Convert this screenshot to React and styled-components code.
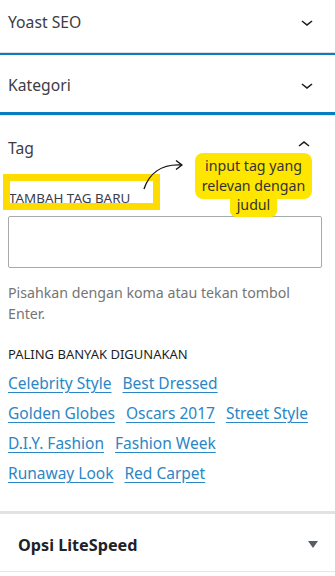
import styled, { createGlobalStyle } from 'styled-components';

const GlobalStyle = createGlobalStyle`
    html, body {
        margin: 0;
        padding: 0;
        background: #fff;
    }
    body {
        font-family: "Noto Sans", "Open Sans", sans-serif;
        color: #3c3c46;
    }
`;

const tags = [
    'Celebrity Style', 'Best Dressed', 'Golden Globes', 'Oscars 2017',
    'Street Style', 'D.I.Y. Fashion', 'Fashion Week', 'Runaway Look', 'Red Carpet',
];

function ChevronDown() {
    return (
        <svg width="24" height="24" viewBox="0 0 24 24">
            <path d="M17.5 11.6L12 16l-5.5-4.4.9-1.2L12 14l4.5-3.6 1 1.2z" fill="#1e1e1e" />
        </svg>
    );
}

function ChevronUp() {
    return (
        <svg width="24" height="24" viewBox="0 0 24 24">
            <path d="M6.5 12.4L12 8l5.5 4.4-.9 1.2L12 10l-4.5 3.6-1-1.2z" fill="#1e1e1e" />
        </svg>
    );
}

export default function App() {
    return (
        <>
            <GlobalStyle />
            <Sidebar>
                <PanelHeader $height={52} $shift={-8}>
                    <span>Yoast SEO</span>
                    <ChevronDown />
                </PanelHeader>
                <Rule $color="#dcdcde" $size={1} />
                <Rule $color="#0a7cc1" $size={2} />

                <PanelHeader $height={57} $shift={3}>
                    <span>Kategori</span>
                    <ChevronDown />
                </PanelHeader>
                <Rule $color="#0a7cc1" $size={3} />
                <Rule $color="#e6e6e6" $size={1} />

                <TagPanel>
                    <TagHeader>
                        <span>Tag</span>
                        <ChevronUp />
                    </TagHeader>

                    <Highlight>
                        <span>TAMBAH TAG BARU</span>
                    </Highlight>

                    <TagInput />

                    <Hint>Pisahkan dengan koma atau tekan tombol Enter.</Hint>

                    <SubTitle>PALING BANYAK DIGUNAKAN</SubTitle>
                    <TagCloud>
                        {tags.map((t) => (
                            <TagLink key={t} href="#">{t}</TagLink>
                        ))}
                    </TagCloud>

                    <Arrow width="50" height="40" viewBox="0 0 50 40">
                        <path d="M3 37 C 8 22, 20 12, 40 13" fill="none" stroke="#111" strokeWidth="1.4" />
                        <path d="M35 8.5 L 41 13 L 35 17.5" fill="none" stroke="#111" strokeWidth="1.4" strokeLinejoin="round" />
                    </Arrow>

                    <Callout>
                        <Bubble>input tag yang<br />relevan dengan</Bubble>
                        <Tail>judul</Tail>
                    </Callout>
                </TagPanel>

                <Rule $color="#e2e2e2" $size={3} />
                <LiteHeader>
                    <span>Opsi LiteSpeed</span>
                    <Caret />
                </LiteHeader>
                <Rule $color="#e6e6e6" $size={1} />
            </Sidebar>
        </>
    );
}

const Sidebar = styled.div`
    width: 335px;
    display: flex;
    flex-direction: column;
`;

const PanelHeader = styled.div`
    height: ${(p) => p.$height}px;
    display: flex;
    align-items: center;
    justify-content: space-between;
    box-sizing: border-box;
    padding: ${(p) => (p.$shift > 0 ? p.$shift : 0)}px 16px ${(p) => (p.$shift < 0 ? -p.$shift : 0)}px 8px;
    font-size: 15.7px;
    color: #3c3c46;
`;

const Rule = styled.div`
    height: ${(p) => p.$size}px;
    background: ${(p) => p.$color};
    flex-shrink: 0;
`;

const TagPanel = styled.section`
    position: relative;
    display: flex;
    flex-direction: column;
    padding: 20px 0 23px;
`;

const TagHeader = styled.div`
    display: flex;
    align-items: center;
    justify-content: space-between;
    padding: 0 19px 0 8px;
    font-size: 15.7px;
    height: 24px;
    color: #3c3c46;

    svg {
        margin-top: -6px;
    }
`;

const Highlight = styled.div`
    margin: 14px 0 0 3px;
    width: 157px;
    height: 36px;
    box-sizing: border-box;
    border: 7px solid #ffdc00;
    display: flex;
    align-items: flex-end;
    overflow: hidden;

    span {
        font-size: 13.4px;
        line-height: 13px;
        color: #3c3c46;
        white-space: nowrap;
        margin-left: -1px;
        margin-bottom: -2px;
    }
`;

const TagInput = styled.input`
    margin: 6px 0 0 8px;
    width: 314px;
    height: 52px;
    box-sizing: border-box;
    border: 1px solid #a7aaad;
    border-radius: 2px;
    background: #fff;
`;

const Hint = styled.p`
    margin: 14px 30px 0 8px;
    font-size: 14.2px;
    line-height: 21px;
    color: #757575;
`;

const SubTitle = styled.h3`
    margin: 21px 0 0 8px;
    font-size: 13px;
    font-weight: 400;
    line-height: 18px;
    color: #1e1e1e;
`;

const TagCloud = styled.div`
    display: flex;
    flex-wrap: wrap;
    column-gap: 11px;
    padding: 5px 12px 0 8px;
    width: 335px;
    box-sizing: border-box;
`;

const TagLink = styled.a`
    font-size: 15.5px;
    line-height: 30px;
    color: #2b86c5;
    text-decoration: underline;
    text-underline-offset: 3px;
`;

const Arrow = styled.svg`
    position: absolute;
    left: 141px;
    top: 36px;
`;

const Callout = styled.div`
    position: absolute;
    left: 195px;
    top: 37px;
    width: 117px;
    display: flex;
    flex-direction: column;
    align-items: center;
    font-size: 14.2px;
    line-height: 20px;
    color: #333;
`;

const Bubble = styled.div`
    width: 100%;
    background: #ffe600;
    border-radius: 8px;
    text-align: center;
    padding: 3px 0 3px;
`;

const Tail = styled.div`
    margin-top: -4px;
    background: #ffe600;
    border-radius: 0 0 6px 6px;
    width: 47px;
    text-align: center;
    padding: 0 0 2px;
`;

const LiteHeader = styled.div`
    height: 57px;
    box-sizing: border-box;
    padding: 4px 17px 0 18px;
    display: flex;
    align-items: center;
    justify-content: space-between;
    font-size: 16.2px;
    font-weight: 700;
    color: #1d2327;
`;

const Caret = styled.span`
    width: 0;
    height: 0;
    border-left: 5px solid transparent;
    border-right: 5px solid transparent;
    border-top: 7px solid #555d66;
`;
